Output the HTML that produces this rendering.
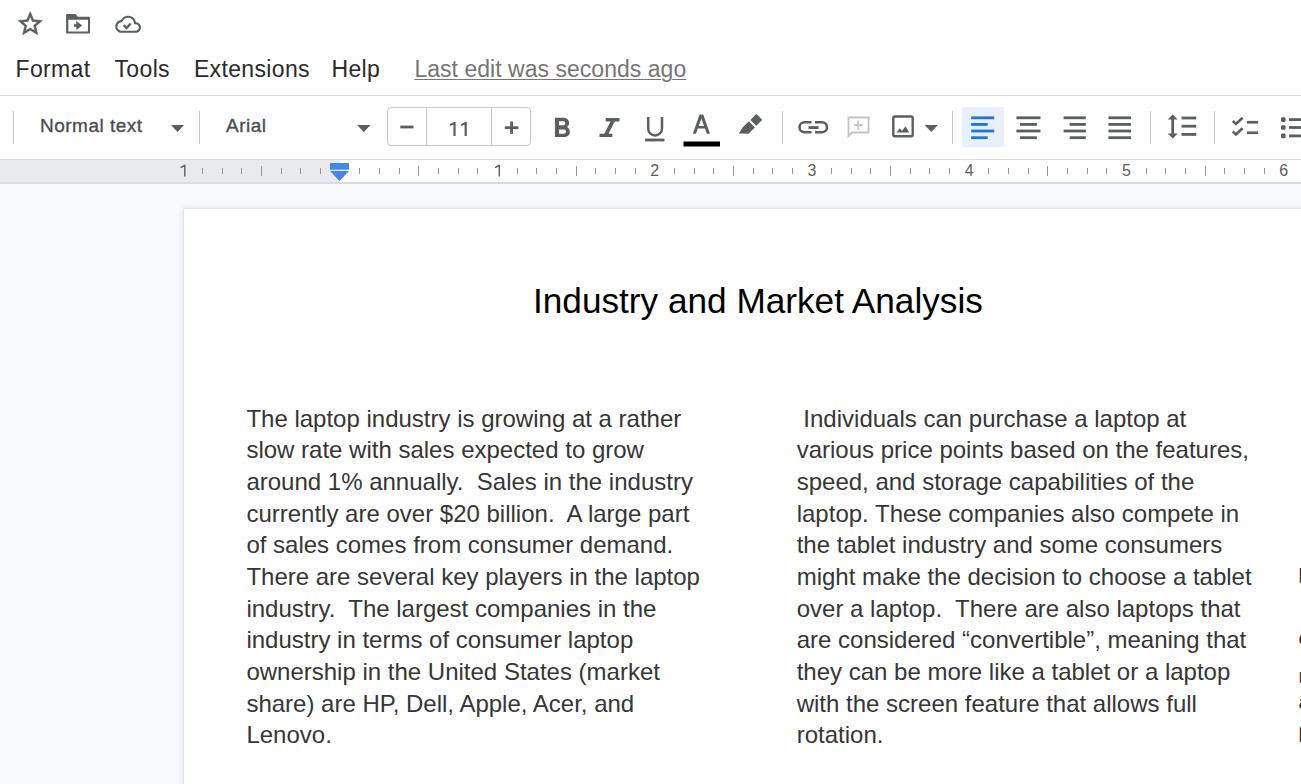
<!DOCTYPE html>
<html><head><meta charset="utf-8">
<style>
*{margin:0;padding:0;box-sizing:border-box}
html,body{width:1301px;height:784px;overflow:hidden;background:#f8f9fa;font-family:"Liberation Sans",sans-serif;position:relative}
.a{position:absolute}
.menu{position:absolute;font-size:23px;color:#2a2a2a;line-height:30px;white-space:nowrap;letter-spacing:0.35px}
.sep{position:absolute;width:1px;height:33px;top:111px;background:#c7c7c7}
.tk{position:absolute;width:1px;height:6px;top:168px;background:#92969a}
.tkl{position:absolute;width:1px;height:10px;top:166px;background:#92969a}
.rn{position:absolute;top:161px;font-size:16px;color:#5a5d61;line-height:20px;width:20px;text-align:center}
.ln{position:absolute;font-size:24px;line-height:31.67px;height:31.67px;color:#363636;white-space:pre}
svg{position:absolute;overflow:visible}
</style></head><body>

<div class="a" style="left:0;top:0;width:1301px;height:159px;background:#fff"></div>
<div class="a" style="left:0;top:95px;width:1301px;height:1px;background:#dadce0"></div>
<div class="a" style="left:962px;top:106.6px;width:41.7px;height:40.9px;background:#e8f0fe;border-radius:2px"></div>
<div class="sep" style="left:12.5px"></div>
<div class="sep" style="left:198.5px"></div>
<div class="sep" style="left:781.9px"></div>
<div class="sep" style="left:952.1px"></div>
<div class="sep" style="left:1150.0px"></div>
<div class="sep" style="left:1214.1px"></div>
<div class="a" style="left:386.8px;top:107.4px;width:144.5px;height:38.7px;border:1px solid #c7c7c7;border-radius:4px"></div>
<div class="a" style="left:426px;top:108px;width:1px;height:37.5px;background:#c7c7c7"></div>
<div class="a" style="left:491px;top:108px;width:1px;height:37.5px;background:#c7c7c7"></div>
<div class="a" style="left:40px;top:115.02px;font-size:19px;line-height:22px;color:#4a4d51;letter-spacing:0.5px;-webkit-text-stroke:0.35px #4a4d51;white-space:nowrap">Normal text</div>
<div class="a" style="left:226px;top:115.02px;font-size:19px;line-height:22px;color:#4a4d51;letter-spacing:0.5px;-webkit-text-stroke:0.35px #4a4d51;white-space:nowrap">Arial</div>
<svg style="left:0;top:0" width="1301" height="160" viewBox="0 0 1301 160"><g fill="#5b5e62"><path transform="translate(18,11.6) scale(1.22) translate(-2,-2)" stroke="#5b5e62" stroke-width="0.45" stroke-linejoin="round" d="M22 9.24l-7.19-.62L12 2 9.19 8.63 2 9.24l5.46 4.73L5.82 21 12 17.27 18.18 21l-1.63-7.03L22 9.24zM12 15.4l-3.76 2.27 1-4.28-3.32-2.88 4.38-.38L12 6.1l1.71 4.04 4.38.38-3.32 2.88 1 4.28L12 15.4z"/><path fill-rule="evenodd" d="M66.1 15.1 Q66.1 14.1 67.1 14.1 H75.5 L77.9 16.8 H89 Q90 16.8 90 17.8 V32.5 Q90 33.5 89 33.5 H67.1 Q66.1 33.5 66.1 32.5 Z M68.3 19.8 V31.5 H88 V19.8 Z"/><rect x="73.9" y="24.2" width="4.8" height="2.6"/><path d="M76.3 21.1 L82.2 25.5 L76.3 30 Z"/><path transform="translate(115.3,11.4) scale(1.07)" d="M19.35 10.04C18.67 6.59 15.64 4 12 4 9.11 4 6.6 5.64 5.35 8.04 2.34 8.36 0 10.91 0 14c0 3.31 2.69 6 6 6h13c2.76 0 5-2.24 5-5 0-2.64-2.05-4.78-4.65-4.96zM19 18H6c-2.21 0-4-1.79-4-4 0-2.05 1.53-3.76 3.56-3.97l1.07-.11.5-.95C8.08 7.14 9.94 6 12 6c2.62 0 4.88 1.86 5.39 4.43l.3 1.5 1.53.11c1.56.1 2.78 1.41 2.78 2.96 0 1.65-1.35 3-3 3z"/><path d="M123.8 25.2 L126.6 28 L130.7 23.5" fill="none" stroke="#5b5e62" stroke-width="2.4"/><path d="M171 125 L184 125 L177.5 132 Z"/><path d="M357 125 L370.6 125 L363.8 132 Z"/><path d="M924.5 125 L938 125 L931.25 132 Z"/><rect x="400.3" y="125.6" width="13.2" height="2.8"/><rect x="504.8" y="126.3" width="13.6" height="2.8"/><rect x="510.2" y="121.5" width="2.8" height="12.4"/><path transform="translate(545.2,112.1) scale(1.39)" d="M15.6 10.79c.97-.67 1.65-1.77 1.65-2.79 0-2.26-1.75-4-4-4H7v14h7.04c2.09 0 3.71-1.7 3.71-3.79 0-1.52-.86-2.82-2.15-3.42zM10 6.5h3c.83 0 1.5.67 1.5 1.5s-.67 1.5-1.5 1.5h-3v-3zm3.5 9H10v-3h3.5c.83 0 1.5.67 1.5 1.5s-.67 1.5-1.5 1.5z"/><path d="M605.7 118 H619.5 V121.4 H614.7 L608.5 133.7 H612.4 V137.1 H599.5 V133.7 H604.3 L610.5 121.4 H605.7 Z"/><path d="M648.2 117 V128.5 A6.9 6.9 0 0 0 662 128.5 V117" fill="none" stroke="#5b5e62" stroke-width="2.5"/><rect x="645" y="138.6" width="19.5" height="2.8"/><path fill-rule="evenodd" d="M699.6 114.5 H703.2 L710 133.8 H706.8 L705 128.6 H697.8 L696 133.8 H692.8 Z M701.4 118.5 L704.05 126 H698.75 Z"/><rect x="683.5" y="141.5" width="36.5" height="5" fill="#000"/><g transform="translate(752.4,123.8) rotate(45)"><rect x="-4.2" y="-9.8" width="8.4" height="8.6" rx="0.8"/><path d="M-4.3 0.8 H4.3 V9.6 L-2.8 16.4 L-4.3 9.6 Z"/></g><path d="M811.5 122.25 H804.5 A5 5 0 0 0 804.5 132.25 H811.5 M815 122.25 H822 A5 5 0 0 1 822 132.25 H815" fill="none" stroke="#5b5e62" stroke-width="2.5"/><rect x="808.5" y="126.2" width="10" height="2.8"/><g fill="none" stroke="#c4c4c4" stroke-width="1.8"><path d="M849.5 117.5 H868.5 V132.5 H852 L848.5 136 V117.5 Z"/><path d="M853.7 125.2 H862.7 M858.2 120.7 V129.7"/></g><rect x="893.3" y="116.5" width="19.4" height="19.7" rx="1.5" fill="none" stroke="#5b5e62" stroke-width="2.4"/><path d="M896.5 132.5 L899.8 128.3 L902 131 L905.5 126.3 L909.2 132.5 Z"/><rect x="971.2" y="116.40" width="23.00" height="2.8" fill="#1a73e8"/><rect x="971.2" y="123.00" width="16.50" height="2.8" fill="#1a73e8"/><rect x="971.2" y="129.60" width="23.00" height="2.8" fill="#1a73e8"/><rect x="971.2" y="136.30" width="16.50" height="2.8" fill="#1a73e8"/><rect x="1016.4" y="116.40" width="24.10" height="2.8"/><rect x="1020" y="123.00" width="16.90" height="2.8"/><rect x="1016.4" y="129.60" width="24.10" height="2.8"/><rect x="1020" y="136.30" width="16.90" height="2.8"/><rect x="1063.6" y="116.40" width="22.20" height="2.8"/><rect x="1069.7" y="123.00" width="16.10" height="2.8"/><rect x="1063.6" y="129.60" width="22.20" height="2.8"/><rect x="1069.7" y="136.30" width="16.10" height="2.8"/><rect x="1108.4" y="116.40" width="22.60" height="2.8"/><rect x="1108.4" y="123.00" width="22.60" height="2.8"/><rect x="1108.4" y="129.60" width="22.60" height="2.8"/><rect x="1108.4" y="136.30" width="22.60" height="2.8"/><path d="M1172.7 114.6 L1177.7 119.6 H1174.1 V133.4 H1177.7 L1172.7 138.4 L1167.7 133.4 H1171.3 V119.6 H1167.7 Z"/><rect x="1181.5" y="116.6" width="14.8" height="2.8"/><rect x="1181.5" y="124.8" width="14.8" height="2.8"/><rect x="1181.5" y="133.0" width="14.8" height="2.8"/><path d="M1232.8 121 L1236 124 L1242.6 117.8 M1232.8 131.5 L1236 134.5 L1242.6 128.3" fill="none" stroke="#5b5e62" stroke-width="2.6"/><rect x="1247" y="120.9" width="11.2" height="2.7"/><rect x="1247" y="131.4" width="11.2" height="2.7"/><rect x="1281" y="117.3" width="4.6" height="4.6" rx="1.3"/><rect x="1289" y="118.19999999999999" width="14" height="2.8"/><rect x="1281" y="125.2" width="4.6" height="4.6" rx="1.3"/><rect x="1289" y="126.1" width="14" height="2.8"/><rect x="1281" y="133.6" width="4.6" height="4.6" rx="1.3"/><rect x="1289" y="134.5" width="14" height="2.8"/><path d="M449.9 123.9 L454.4 121.8 H455.6 V135.9 H453.4 V124.7 L449.9 125.9 Z M461.1 123.9 L465.6 121.8 H466.8 V135.9 H464.6 V124.7 L461.1 125.9 Z"/></g></svg>
<div class="menu" style="left:15.5px;top:53.63px">Format</div>
<div class="menu" style="left:114.5px;top:53.63px">Tools</div>
<div class="menu" style="left:193.9px;top:53.63px">Extensions</div>
<div class="menu" style="left:331.5px;top:53.63px">Help</div>
<div class="menu" style="left:414.4px;top:53.63px;letter-spacing:0.03px;color:#757575;text-decoration:underline;text-decoration-thickness:1.3px;text-underline-offset:2px">Last edit was seconds ago</div>
<div class="a" style="left:0;top:159px;width:1301px;height:1px;background:#dadce0"></div>
<div class="a" style="left:0;top:160px;width:1301px;height:22px;background:#fff"></div>
<div class="a" style="left:0;top:160px;width:340px;height:22px;background:#e8eaed"></div>
<div class="a" style="left:0;top:182px;width:1301px;height:1.5px;background:#dadce0"></div>
<div class="tk" style="left:202px"></div>
<div class="tk" style="left:222px"></div>
<div class="tk" style="left:241px"></div>
<div class="tkl" style="left:261px"></div>
<div class="tk" style="left:281px"></div>
<div class="tk" style="left:300px"></div>
<div class="tk" style="left:320px"></div>
<div class="tk" style="left:359px"></div>
<div class="tk" style="left:379px"></div>
<div class="tk" style="left:399px"></div>
<div class="tkl" style="left:418px"></div>
<div class="tk" style="left:438px"></div>
<div class="tk" style="left:458px"></div>
<div class="tk" style="left:477px"></div>
<svg style="left:0;top:0" width="1301" height="190"><path transform="translate(314.50,0)" d="M184.1 164.7 H185.5 V176.4 H184.1 V166.8 L180.4 168.3 V166.9 Z" fill="#5a5d61"/></svg>
<div class="tk" style="left:517px"></div>
<div class="tk" style="left:536px"></div>
<div class="tk" style="left:556px"></div>
<div class="tkl" style="left:576px"></div>
<div class="tk" style="left:595px"></div>
<div class="tk" style="left:615px"></div>
<div class="tk" style="left:635px"></div>
<div class="rn" style="left:644.75px">2</div>
<div class="tk" style="left:674px"></div>
<div class="tk" style="left:694px"></div>
<div class="tk" style="left:713px"></div>
<div class="tkl" style="left:733px"></div>
<div class="tk" style="left:753px"></div>
<div class="tk" style="left:772px"></div>
<div class="tk" style="left:792px"></div>
<div class="rn" style="left:802.00px">3</div>
<div class="tk" style="left:831px"></div>
<div class="tk" style="left:851px"></div>
<div class="tk" style="left:870px"></div>
<div class="tkl" style="left:890px"></div>
<div class="tk" style="left:910px"></div>
<div class="tk" style="left:929px"></div>
<div class="tk" style="left:949px"></div>
<div class="rn" style="left:959.25px">4</div>
<div class="tk" style="left:988px"></div>
<div class="tk" style="left:1008px"></div>
<div class="tk" style="left:1028px"></div>
<div class="tkl" style="left:1047px"></div>
<div class="tk" style="left:1067px"></div>
<div class="tk" style="left:1087px"></div>
<div class="tk" style="left:1106px"></div>
<div class="rn" style="left:1116.50px">5</div>
<div class="tk" style="left:1146px"></div>
<div class="tk" style="left:1165px"></div>
<div class="tk" style="left:1185px"></div>
<div class="tkl" style="left:1205px"></div>
<div class="tk" style="left:1224px"></div>
<div class="tk" style="left:1244px"></div>
<div class="tk" style="left:1264px"></div>
<div class="rn" style="left:1273.75px">6</div>
<div class="tk" style="left:1303px"></div>
<svg style="left:0;top:0" width="300" height="190"><path d="M184.1 164.7 H185.5 V176.4 H184.1 V166.8 L180.4 168.3 V166.9 Z" fill="#5a5d61"/></svg>
<svg style="left:0;top:0" width="1301" height="190"><rect x="330" y="163" width="19" height="6.7" fill="#4285f4"/><path d="M330 171 L349 171 L339.5 181 Z" fill="#4285f4"/></svg>
<div class="a" style="left:184px;top:209px;width:1200px;height:700px;background:#fff;box-shadow:0 0 0 0.5px rgba(60,64,67,.08),0 0 5px 1px rgba(60,64,67,.11)"></div>
<div class="a" style="left:533px;top:281.10px;font-size:35.2px;line-height:40px;color:#000;white-space:pre">Industry and Market Analysis</div>
<div class="ln" style="left:246.4px;top:402.75px">The laptop industry is growing at a rather</div>
<div class="ln" style="left:246.4px;top:434.42px">slow rate with sales expected to grow</div>
<div class="ln" style="left:246.4px;top:466.09px">around 1% annually.  Sales in the industry</div>
<div class="ln" style="left:246.4px;top:497.76px">currently are over $20 billion.  A large part</div>
<div class="ln" style="left:246.4px;top:529.43px">of sales comes from consumer demand.</div>
<div class="ln" style="left:246.4px;top:561.10px">There are several key players in the laptop</div>
<div class="ln" style="left:246.4px;top:592.77px">industry.  The largest companies in the</div>
<div class="ln" style="left:246.4px;top:624.44px">industry in terms of consumer laptop</div>
<div class="ln" style="left:246.4px;top:656.11px">ownership in the United States (market</div>
<div class="ln" style="left:246.4px;top:687.78px">share) are HP, Dell, Apple, Acer, and</div>
<div class="ln" style="left:246.4px;top:719.45px">Lenovo.</div>
<div class="ln" style="left:796.7px;top:402.75px"> Individuals can purchase a laptop at</div>
<div class="ln" style="left:796.7px;top:434.42px">various price points based on the features,</div>
<div class="ln" style="left:796.7px;top:466.09px">speed, and storage capabilities of the</div>
<div class="ln" style="left:796.7px;top:497.76px">laptop. These companies also compete in</div>
<div class="ln" style="left:796.7px;top:529.43px">the tablet industry and some consumers</div>
<div class="ln" style="left:796.7px;top:561.10px">might make the decision to choose a tablet</div>
<div class="ln" style="left:796.7px;top:592.77px">over a laptop.  There are also laptops that</div>
<div class="ln" style="left:796.7px;top:624.44px">are considered “convertible”, meaning that</div>
<div class="ln" style="left:796.7px;top:656.11px">they can be more like a tablet or a laptop</div>
<div class="ln" style="left:796.7px;top:687.78px">with the screen feature that allows full</div>
<div class="ln" style="left:796.7px;top:719.45px">rotation.</div>
<div class="a" style="left:1298.5px;top:563.57px;font-size:20px;line-height:24px;color:#333">l</div>
<div class="a" style="left:1298.5px;top:626.07px;font-size:20px;line-height:24px;color:#333">e</div>
<div class="a" style="left:1298.5px;top:664.07px;font-size:20px;line-height:24px;color:#333">r</div>
<div class="a" style="left:1298.5px;top:690.07px;font-size:20px;line-height:24px;color:#333">a</div>
<div class="a" style="left:1298.5px;top:722.57px;font-size:20px;line-height:24px;color:#333">b</div>
</body></html>
